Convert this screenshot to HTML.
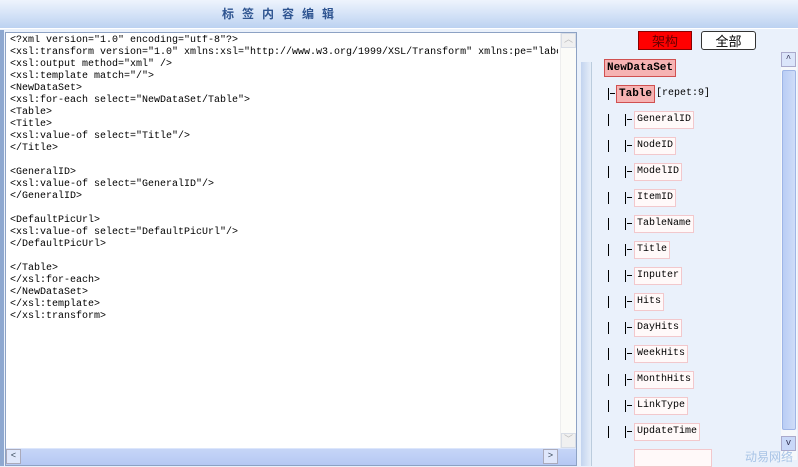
<!DOCTYPE html>
<html><head><meta charset="utf-8"><style>
*{margin:0;padding:0;box-sizing:border-box}
body{width:798px;height:466px;overflow:hidden;background:#eaf1fb;position:relative;font-family:"Liberation Mono","Noto Sans CJK SC",monospace}
.hdr{position:absolute;left:0;top:0;width:798px;height:29px;background:linear-gradient(#eef4fd,#bcd2f1);border-bottom:1px solid #fff}
.ttl{position:absolute;left:222px;top:5px;font:bold 12px "Noto Sans CJK SC",sans-serif;color:#2f5591;letter-spacing:8px}
.lstrip{position:absolute;left:0;top:30px;width:4px;height:436px;background:#8ea8d0}
.ta{position:absolute;left:5px;top:32px;width:572px;height:434px;background:#fff;border:1px solid #8da2c4}
pre{position:absolute;left:4px;top:2px;font:10px/12px "Liberation Mono",monospace;color:#000;white-space:pre;width:548px;overflow:hidden}
.vs{position:absolute;right:0;top:0;width:16px;height:416px;background:#fbfbf8;border-left:1px solid #eee}
.ar{position:absolute;width:15px;height:15px;border:1px solid #d8dde6;background:#f0f0f0;color:#bbb;font-size:9px;text-align:center;line-height:13px}
.hs{position:absolute;left:0;bottom:0;width:570px;height:17px;background:linear-gradient(#c6d5f7,#b6c8f3);border-top:1px solid #dce6fb}
.split{position:absolute;left:581px;top:62px;width:11px;height:404px;background:linear-gradient(90deg,#c3d4ef,#e6eef9);border-right:1px solid #bcd}
.rvs{position:absolute;left:781px;top:52px;width:16px;height:408px;background:#f6f8fb}
.thumb{position:absolute;left:1px;top:18px;width:14px;height:360px;background:linear-gradient(90deg,#b9cdf5,#cfdcf8);border:1px solid #9fb5e6;border-radius:2px}
.btn1{position:absolute;left:638px;top:31px;width:54px;height:19px;background:#f00;border:1px solid #800;color:#600;font:13px "Noto Sans CJK SC",sans-serif;text-align:center;line-height:17px}
.btn2{position:absolute;left:701px;top:31px;width:55px;height:19px;background:#fff;border:1px solid #333;border-radius:3px;color:#000;font:13px "Noto Sans CJK SC",sans-serif;text-align:center;line-height:17px}
.n{position:absolute;height:18px;font:10px/16px "Liberation Mono",monospace;padding:0 2px;border:1px solid #f2c8cc;background:#fff9f9;color:#000}
.b{background:#f6b3b3;border:1px solid #d05050;font-weight:bold;font-size:11px}
.bar{position:absolute;width:1px;height:12px;background:#000}
.dash{position:absolute;width:5px;height:1px;background:#000}
.t{position:absolute;font:10px/18px "Liberation Mono",monospace;color:#000}
.wm{position:absolute;left:745px;top:448px;font:12px "Noto Sans CJK SC",sans-serif;color:#a8c4e6}
</style></head><body>
<div class="hdr"><div class="ttl">标签内容编辑</div></div>
<div class="lstrip"></div>
<div class="ta">
<pre>&lt;?xml version="1.0" encoding="utf-8"?&gt;
&lt;xsl:transform version="1.0" xmlns:xsl="http://www.w3.org/1999/XSL/Transform" xmlns:pe="labe
&lt;xsl:output method="xml" /&gt;
&lt;xsl:template match="/"&gt;
&lt;NewDataSet&gt;
&lt;xsl:for-each select="NewDataSet/Table"&gt;
&lt;Table&gt;
&lt;Title&gt;
&lt;xsl:value-of select="Title"/&gt;
&lt;/Title&gt;

&lt;GeneralID&gt;
&lt;xsl:value-of select="GeneralID"/&gt;
&lt;/GeneralID&gt;

&lt;DefaultPicUrl&gt;
&lt;xsl:value-of select="DefaultPicUrl"/&gt;
&lt;/DefaultPicUrl&gt;

&lt;/Table&gt;
&lt;/xsl:for-each&gt;
&lt;/NewDataSet&gt;
&lt;/xsl:template&gt;
&lt;/xsl:transform&gt;</pre>
<div class="vs"><div class="ar" style="left:0;top:0">︿</div><div class="ar" style="left:0;top:400px">﹀</div></div>
<div class="hs"><div class="ar" style="left:0;top:0;background:#dfe7fb;color:#345;border-color:#aab">&lt;</div><div class="ar" style="left:537px;top:0;background:#dfe7fb;color:#345;border-color:#aab">&gt;</div></div>
</div>
<div class="split"></div>
<div class="btn1">架构</div><div class="btn2">全部</div>
<div class="rvs"><div class="ar" style="left:0;top:0;background:#dbe5fa;color:#335;border-color:#aac">^</div><div class="thumb"></div><div class="ar" style="left:0;top:384px;background:#c9d8f8;color:#335;border-color:#aac">v</div></div>
<div class="n b" style="left:604px;top:59px">NewDataSet</div>
<div class="bar" style="left:608px;top:88px"></div><div class="dash" style="left:610px;top:93px"></div><div class="n b" style="left:616px;top:85px">Table</div><div class="t" style="left:656px;top:85px">[repet:9]</div>
<div id="rows"></div>
<div class="n" style="left:634px;top:449px;width:78px"></div>
<div class="wm">动易网络</div>
<script>
var names=["GeneralID","NodeID","ModelID","ItemID","TableName","Title","Inputer","Hits","DayHits","WeekHits","MonthHits","LinkType","UpdateTime"],h="";
names.forEach(function(n,i){var y=111+i*26;
h+='<div class="bar" style="left:608px;top:'+(y+3)+'px"></div><div class="bar" style="left:625px;top:'+(y+3)+'px"></div><div class="dash" style="left:627px;top:'+(y+8)+'px"></div><div class="n" style="left:634px;top:'+y+'px">'+n+'</div>';});
document.getElementById("rows").innerHTML=h;
</script>
</body></html>
